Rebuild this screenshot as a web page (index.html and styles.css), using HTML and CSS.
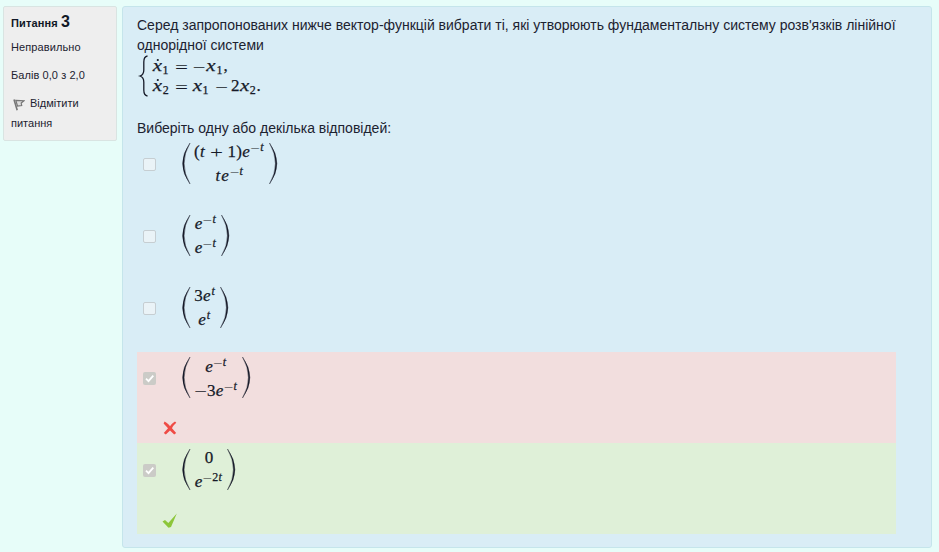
FILE: index.html
```
<!DOCTYPE html>
<html lang="uk">
<head>
<meta charset="utf-8">
<title>Питання 3</title>
<link rel="stylesheet" href="styles.css">
</head>
<body>
<div class="question">
  <aside class="info">
    <h3 class="number">Питання <span class="qno">3</span></h3>
    <div class="state">Неправильно</div>
    <div class="grade">Балів 0,0 з 2,0</div>
    <div class="flag"><svg class="flag-icon" width="12" height="13" viewBox="0 0 12 13"><path d="M1 1.5 4.2 12.2" stroke="#777" stroke-width="1.6" fill="none"/><path d="M2.8 2.3 11 2.7 8.2 5 8.7 7.5 4.5 8Z" fill="#ddd" stroke="#777" stroke-width="1.2"/></svg><span>Відмітити</span><br>питання</div>
  </aside>
  <main class="content">
    <p class="qtext">Серед запропонованих нижче вектор-функцій вибрати ті, які утворюють фундаментальну систему розв'язків лінійної<br>однорідної системи</p>
    <svg class="math system" width="130" height="43">
      <path class="bracket" d="M10.5 1C7 1.5 6.8 4 6.8 7V15C6.8 18 6 20 3 21C6 22 6.8 24 6.8 27V35C6.8 38 7 40.5 10.5 41"/>
      <circle cx="20.8" cy="5" r="1.1"/>
      <text class="i" x="15.8" y="16" textLength="9.3" lengthAdjust="spacingAndGlyphs">x</text>
      <text class="i" x="69.3" y="16" textLength="9.3" lengthAdjust="spacingAndGlyphs">x</text>
      <text><tspan class="s" x="25.5" y="19">1</tspan><tspan class="s" x="79.5" y="19">1</tspan><tspan x="86.5" y="16">,</tspan></text>
      <text class="op" x="38" y="17.5" textLength="13" lengthAdjust="spacingAndGlyphs">=</text>
      <text class="op" x="55.5" y="17.5" textLength="13" lengthAdjust="spacingAndGlyphs">−</text>
      <circle cx="20.8" cy="25" r="1.1"/>
      <text class="i" x="15.8" y="36" textLength="9.3" lengthAdjust="spacingAndGlyphs">x</text>
      <text class="i" x="55.8" y="36" textLength="9.3" lengthAdjust="spacingAndGlyphs">x</text>
      <text class="i" x="103" y="36" textLength="9.3" lengthAdjust="spacingAndGlyphs">x</text>
      <text><tspan class="s" x="25.7" y="39">2</tspan><tspan class="s" x="65.5" y="39">1</tspan><tspan x="94" y="36">2</tspan><tspan class="s" x="112.7" y="39">2</tspan><tspan x="119.5" y="36">.</tspan></text>
      <text class="op" x="38" y="37.5" textLength="13" lengthAdjust="spacingAndGlyphs">=</text>
      <text class="op" x="78" y="37.5" textLength="13" lengthAdjust="spacingAndGlyphs">−</text>
    </svg>
    <p class="prompt">Виберіть одну або декілька відповідей:</p>
    <div class="answers">
      <div class="answer">
        <span class="box"></span>
        <svg class="math" width="100" height="44">
          <path class="paren" d="M9 1Q-5.8 21.5 9 42Q-2.8 21.5 9 1ZM88.5 1Q103.3 21.5 88.5 42Q100.3 21.5 88.5 1Z"/>
          <text><tspan x="13" y="15">(</tspan><tspan class="i" x="19" y="15">t</tspan><tspan x="46.5" y="15">1</tspan><tspan x="55.3" y="15">)</tspan><tspan class="i" x="61.3" y="15">e</tspan><tspan class="i s" x="79.3" y="9">t</tspan></text>
          <text class="op" x="29" y="16" textLength="13" lengthAdjust="spacingAndGlyphs">+</text>
          <text class="op s" x="69.5" y="10" textLength="9.5" lengthAdjust="spacingAndGlyphs">−</text>
          <text><tspan class="i" x="34.5" y="39">t</tspan><tspan class="i" x="40.2" y="39">e</tspan><tspan class="i s" x="58.6" y="33">t</tspan></text>
          <text class="op s" x="49" y="34" textLength="9.5" lengthAdjust="spacingAndGlyphs">−</text>
        </svg>
      </div>
      <div class="answer">
        <span class="box"></span>
        <svg class="math" width="100" height="44">
          <path class="paren" d="M9 1Q-5.8 21.5 9 42Q-2.8 21.5 9 1ZM40.5 1Q55.3 21.5 40.5 42Q52.3 21.5 40.5 1Z"/>
          <text><tspan class="i" x="13.8" y="15">e</tspan><tspan class="i s" x="31.5" y="9">t</tspan><tspan class="i" x="13.8" y="39">e</tspan><tspan class="i s" x="31.5" y="33">t</tspan></text>
          <text class="op s" x="21.7" y="10" textLength="9.5" lengthAdjust="spacingAndGlyphs">−</text>
          <text class="op s" x="21.7" y="34" textLength="9.5" lengthAdjust="spacingAndGlyphs">−</text>
        </svg>
      </div>
      <div class="answer third">
        <span class="box"></span>
        <svg class="math" width="100" height="44">
          <path class="paren" d="M9 1Q-5.8 21.5 9 42Q-2.8 21.5 9 1ZM39.5 1Q54.3 21.5 39.5 42Q51.3 21.5 39.5 1Z"/>
          <text><tspan x="13.3" y="14.5">3</tspan><tspan class="i" x="22" y="14.5">e</tspan><tspan class="i s" x="30.4" y="8.5">t</tspan><tspan class="i" x="17.3" y="39">e</tspan><tspan class="i s" x="25.7" y="33">t</tspan></text>
        </svg>
      </div>
      <div class="answer wrong">
        <span class="box checked"><svg width="13" height="13"><path d="M3 6.7 5.5 9.2 10.3 3.7"/></svg></span>
        <svg class="math" width="100" height="44">
          <path class="paren" d="M9 1Q-5.8 21.5 9 42Q-2.8 21.5 9 1ZM61.5 1Q76.3 21.5 61.5 42Q73.3 21.5 61.5 1Z"/>
          <text><tspan class="i" x="24.2" y="15.5">e</tspan><tspan class="i s" x="41.8" y="9.5">t</tspan><tspan x="26" y="39.5">3</tspan><tspan class="i" x="34.7" y="39.5">e</tspan><tspan class="i s" x="52.5" y="33.5">t</tspan></text>
          <text class="op s" x="32.2" y="10.5" textLength="9.5" lengthAdjust="spacingAndGlyphs">−</text>
          <text class="op" x="13" y="40.5" textLength="13" lengthAdjust="spacingAndGlyphs">−</text>
          <text class="op s" x="42.9" y="34.5" textLength="9.5" lengthAdjust="spacingAndGlyphs">−</text>
        </svg>
        <svg class="mark" width="16" height="16" viewBox="0 0 16 16"><path d="M2.6 1.6C5.5 3 7 5 8 6.2 9.5 4.2 11 2.7 13 1.6L14.3 2.8C12 4.8 10.8 6.5 10 8.2L14.2 13 12.2 14.4 8 10.5 3.8 14.6 1.8 13 6 8.2 1.6 3.4Z" fill="#ef4b45"/></svg>
      </div>
      <div class="answer right">
        <span class="box checked"><svg width="13" height="13"><path d="M3 6.7 5.5 9.2 10.3 3.7"/></svg></span>
        <svg class="math" width="100" height="44">
          <path class="paren" d="M9 1Q-5.8 21.5 9 42Q-2.8 21.5 9 1ZM46.5 1Q61.3 21.5 46.5 42Q58.3 21.5 46.5 1Z"/>
          <text><tspan x="23.7" y="15">0</tspan><tspan class="i" x="13.8" y="39">e</tspan><tspan class="s" x="31.2" y="33">2</tspan><tspan class="i s" x="37.5" y="33">t</tspan></text>
          <text class="op s" x="21.7" y="34" textLength="9.5" lengthAdjust="spacingAndGlyphs">−</text>
        </svg>
        <svg class="mark" width="16" height="16" viewBox="0 0 16 16"><path d="M.5 9.5 3 8 6.3 11 14.8 1.5 9 15 6.5 15.8Z" fill="#8dc63a"/></svg>
      </div>
    </div>
  </main>
</div>
</body>
</html>
```
FILE: styles.css
```
* { box-sizing: border-box; }
body { margin: 0; background: #e7fdf9; color: #1c2230; font-family: "Liberation Sans", Arial, sans-serif; }
svg { display: block; }
.question { display: flex; align-items: flex-start; gap: 5px; height: 552px; padding: 6px 7px 0 3px; }
.info { width: 114px; height: 135px; padding: 4px 7px; background: #eee; border: 1px solid #d9e4e2; border-radius: 2px; font-size: 11px; line-height: 20px; }
.number { margin: 0; font-size: 11px; line-height: 21px; letter-spacing: .12px; white-space: nowrap; color: #111827; }
.qno { font-size: 16px; }
.state { margin-top: 3px; letter-spacing: .1px; }
.grade { margin-top: 8px; letter-spacing: .07px; white-space: nowrap; }
.flag { margin-top: 8px; }
.flag-icon { display: inline-block; vertical-align: -4px; margin: 0 5px 0 2px; }
.content { width: 810px; height: 542px; padding: 8px 35px 0 14px; background: #d9edf6; border: 1px solid #c5e5eb; border-radius: 3px; }
.qtext { margin: 0; font-size: 14px; line-height: 20px; white-space: nowrap; height: 40px; }
.prompt { margin: 20px 0 0; font-size: 14px; line-height: 20px; height: 19px; }
.math { font-family: "Liberation Serif", serif; font-size: 17px; fill: #161a28; overflow: visible; }
.math text { stroke: #161a28; stroke-width: .25px; }
.math text.op { stroke: none; }
.math .i { font-style: italic; }
.math .s { font-size: 12px; }
.paren { stroke: #161a28; stroke-width: .4; }
.bracket { fill: none; stroke: #161a28; stroke-width: 1.3; }
.answer { display: grid; grid-template-columns: 13px 100px; grid-template-rows: 44px auto; column-gap: 25px; height: 72px; padding: 5px 0 0 6px; }
.answer.third { height: 71px; }
.box { width: 13px; height: 13px; margin-top: 15.5px; border: 1px solid #c6ced2; border-radius: 2px; background: #eaf3f7; }
.box.checked { margin-top: 16px; border: 0; background: #cbcbc7; }
.box path { fill: none; stroke: #fff; stroke-width: 1.8; }
.answer.wrong { height: 91px; padding-top: 4px; background: #f2dede; }
.answer.right { height: 91px; background: #dff0d8; }
.mark { grid-column: 1 / 3; margin: 20px 0 0 19px; }
```
